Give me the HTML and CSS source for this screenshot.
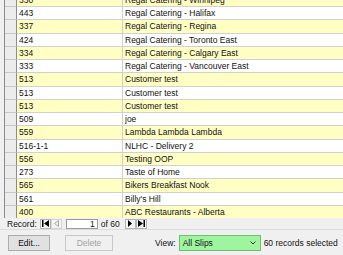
FILE: index.html
```html
<!DOCTYPE html>
<html lang="en">
<head>
    <meta charset="UTF-8">
    <title>Slips</title>
    <link rel="stylesheet" href="styles.css">
</head>
<body>
    <div class="grid">
        <div class="rows">
            <div class="row"><div class="sel"></div><div class="cell id">330</div><div class="cell name">Regal Catering - Winnipeg</div></div>
            <div class="row"><div class="sel"></div><div class="cell id">443</div><div class="cell name">Regal Catering - Halifax</div></div>
            <div class="row"><div class="sel"></div><div class="cell id">337</div><div class="cell name">Regal Catering - Regina</div></div>
            <div class="row"><div class="sel"></div><div class="cell id">424</div><div class="cell name">Regal Catering - Toronto East</div></div>
            <div class="row"><div class="sel"></div><div class="cell id">334</div><div class="cell name">Regal Catering - Calgary East</div></div>
            <div class="row"><div class="sel"></div><div class="cell id">333</div><div class="cell name">Regal Catering - Vancouver East</div></div>
            <div class="row"><div class="sel"></div><div class="cell id">513</div><div class="cell name">Customer test</div></div>
            <div class="row"><div class="sel"></div><div class="cell id">513</div><div class="cell name">Customer test</div></div>
            <div class="row"><div class="sel"></div><div class="cell id">513</div><div class="cell name">Customer test</div></div>
            <div class="row"><div class="sel"></div><div class="cell id">509</div><div class="cell name">joe</div></div>
            <div class="row"><div class="sel"></div><div class="cell id">559</div><div class="cell name">Lambda Lambda Lambda</div></div>
            <div class="row"><div class="sel"></div><div class="cell id">516-1-1</div><div class="cell name">NLHC - Delivery 2</div></div>
            <div class="row"><div class="sel"></div><div class="cell id">556</div><div class="cell name">Testing OOP</div></div>
            <div class="row"><div class="sel"></div><div class="cell id">273</div><div class="cell name">Taste of Home</div></div>
            <div class="row"><div class="sel"></div><div class="cell id">565</div><div class="cell name">Bikers Breakfast Nook</div></div>
            <div class="row"><div class="sel"></div><div class="cell id">561</div><div class="cell name">Billy's Hill</div></div>
            <div class="row"><div class="sel"></div><div class="cell id">400</div><div class="cell name">ABC Restaurants - Alberta</div></div>
        </div>
    </div>

    <div class="recordbar">
        <span class="rec-label">Record:</span>
        <span class="nav">
            <svg width="7" height="7" viewBox="0 0 7 7"><rect x="0" y="0" width="1.5" height="7" fill="#000"/><polygon points="7,0 7,7 2,3.5" fill="#000"/></svg>
        </span>
        <span class="nav off">
            <svg width="5" height="7" viewBox="0 0 5 7"><polygon points="4.5,0.5 4.5,6.5 0.5,3.5" fill="none" stroke="#a8a8a8" stroke-width="1"/></svg>
        </span>
        <span class="recbox">1</span>
        <span class="of">of 60</span>
        <span class="nav">
            <svg width="4" height="7" viewBox="0 0 4 7"><polygon points="0,0 0,7 4,3.5" fill="#000"/></svg>
        </span>
        <span class="nav">
            <svg width="7" height="7" viewBox="0 0 7 7"><polygon points="0,0 0,7 5,3.5" fill="#000"/><rect x="5.5" y="0" width="1.5" height="7" fill="#000"/></svg>
        </span>
    </div>

    <div class="footer">
        <button class="btn">Edit...</button>
        <button class="btn disabled">Delete</button>
        <span class="view-label">View:</span>
        <div class="viewsel">
            <span>All Slips</span>
            <svg width="6" height="4" viewBox="0 0 6 4"><polyline points="0.5,0.5 3,3 5.5,0.5" fill="none" stroke="#333" stroke-width="1"/></svg>
        </div>
        <span class="count">60 records selected</span>
    </div>
</body>
</html>
```

FILE: styles.css
```css
body {
    margin: 0;
    padding: 0;
    width: 343px;
    height: 255px;
    overflow: hidden;
    background-color: #f0f0f0;
    font-family: "Liberation Sans", Arial, sans-serif;
    font-size: 8.5px;
    color: #111;
}
.grid {
    margin-left: 4px;
    height: 218px;
    overflow: hidden;
    border-left: 1px solid #8c8c8c;
    background-color: #fff;
}
.rows {
    margin-top: -6.25px;
}
.row {
    display: flex;
    height: 12.25px;
    border-bottom: 1px solid #d0d0d0;
}
.row:nth-child(odd) {
    background-color: #ffffc4;
}
.sel {
    width: 11px;
    background-color: #ececec;
    border-right: 1px solid #8c8c8c;
    border-bottom: 1px solid #c8c8c8;
    margin-bottom: -1px;
}
.cell {
    line-height: 12.25px;
    padding-left: 2px;
    white-space: nowrap;
}
.id {
    width: 103px;
    border-right: 1px solid #d0d0d0;
}
.name {
    flex: 1;
}
.recordbar {
    display: flex;
    align-items: center;
    height: 11px;
    padding-left: 7px;
    border-bottom: 1px solid #dcdcdc;
}
.rec-label {
    margin-right: 3px;
}
.nav {
    display: flex;
    align-items: center;
    justify-content: center;
    width: 11px;
    height: 10px;
    box-sizing: border-box;
    border: 1px solid #b4b4b4;
    background-color: #f4f4f4;
}
.nav.off {
    margin-right: 4px;
    border-color: #d4d4d4;
}
.recbox {
    width: 32px;
    height: 10px;
    box-sizing: border-box;
    border: 1px solid #9a9a9a;
    background-color: #fff;
    text-align: right;
    line-height: 8px;
    padding-right: 2px;
}
.of {
    margin-left: 3px;
    margin-right: 5px;
}
.footer {
    display: flex;
    align-items: center;
    padding: 5px 0 0 8px;
}
.btn {
    height: 16px;
    padding: 0;
    font-family: "Liberation Sans", Arial, sans-serif;
    font-size: 8.5px;
    color: #111;
    background-color: #e1e1e1;
    border: 1px solid #adadad;
    border-radius: 0;
}
.btn:first-child {
    width: 42px;
    margin-right: 15px;
}
.btn.disabled {
    width: 48px;
    color: #a2a2a2;
    background-color: #f0f0f0;
    border-color: #c8c8c8;
}
.view-label {
    margin-left: 42px;
    margin-right: 3px;
}
.viewsel {
    display: flex;
    align-items: center;
    justify-content: space-between;
    width: 82px;
    height: 16px;
    box-sizing: border-box;
    padding: 0 4px 0 3px;
    background-color: #9ff59f;
    border: 1px solid #6fbf6f;
}
.count {
    margin-left: 3px;
}
```
